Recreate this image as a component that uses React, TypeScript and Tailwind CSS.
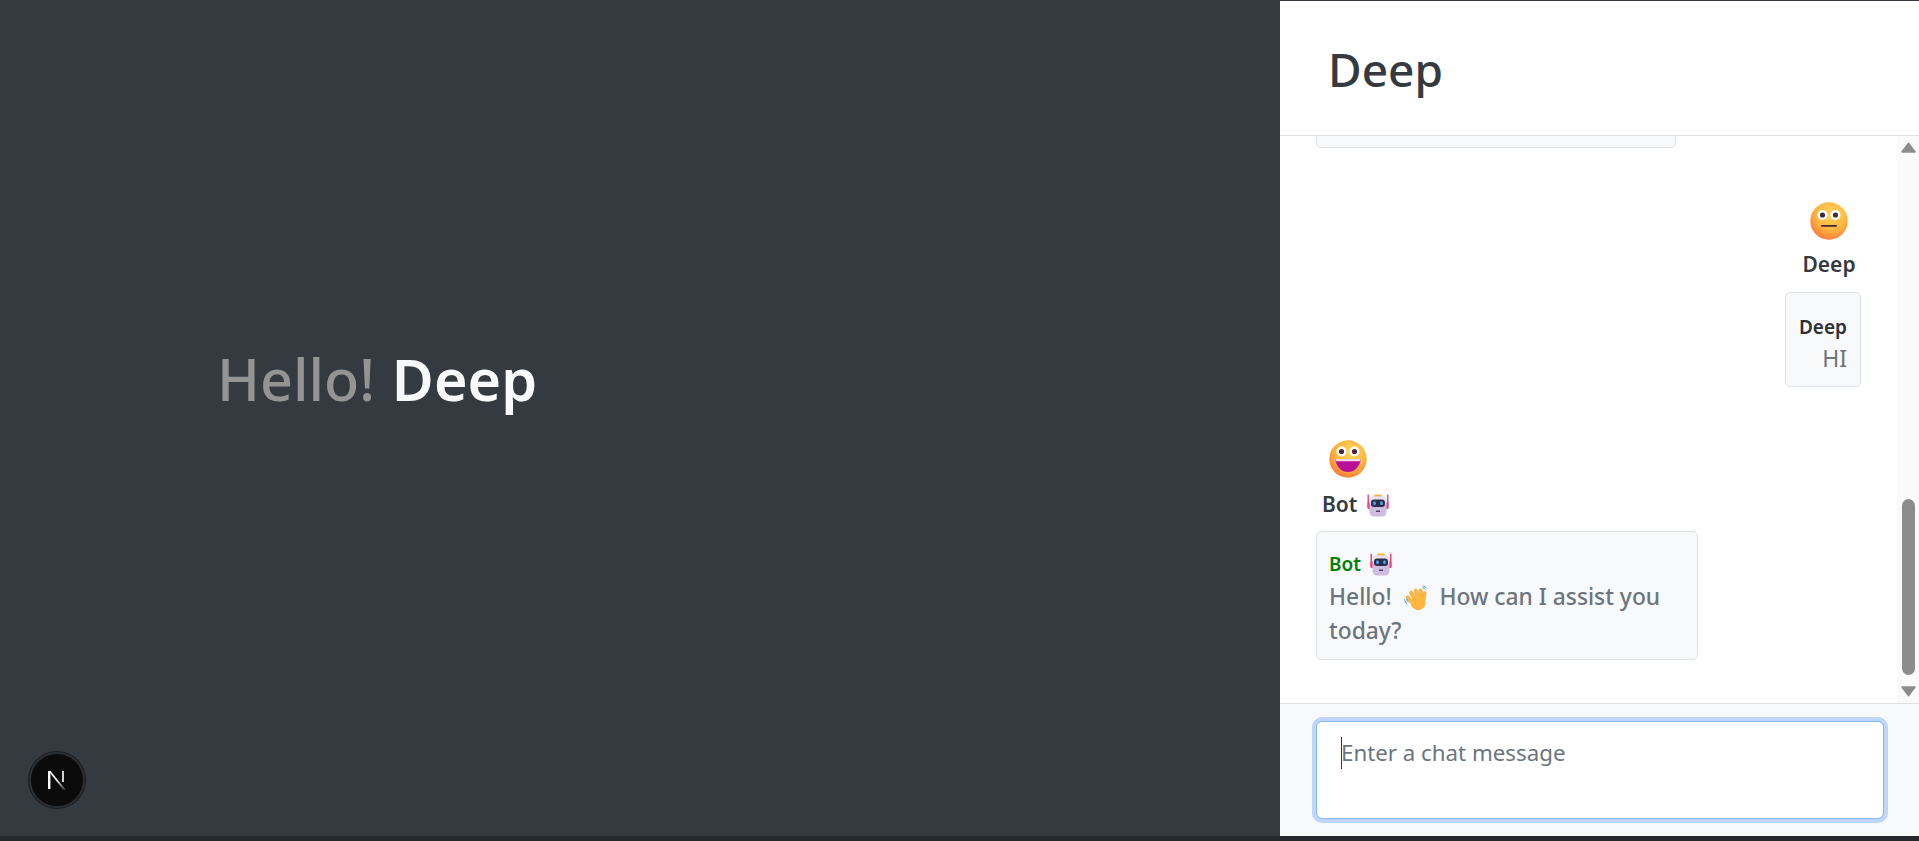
const SANS = "font-['Noto_Sans','Open_Sans',sans-serif]";

function FaceBase({ id }: { id: string }) {
  return (
    <>
      <defs>
        <radialGradient id={id} cx="58%" cy="32%" r="78%">
          <stop offset="0%" stopColor="#ffd75e" />
          <stop offset="55%" stopColor="#ffb43e" />
          <stop offset="88%" stopColor="#fa7f3c" />
          <stop offset="100%" stopColor="#ef6c8c" />
        </radialGradient>
      </defs>
      <circle cx="20" cy="20" r="18.7" fill={`url(#${id})`} />
    </>
  );
}

function StareFace() {
  return (
    <svg viewBox="0 0 40 40" className="w-10 h-10">
      <FaceBase id="stare" />
      <circle cx="13.500" cy="14" r="5" fill="#fff" />
      <circle cx="26.500" cy="14" r="5" fill="#fff" />
      <circle cx="13.500" cy="14" r="2.600" fill="#43273a" />
      <circle cx="26.500" cy="14" r="2.600" fill="#43273a" />
      <rect x="12" y="24" width="16" height="1.800" rx=".9" fill="#43273a" />
    </svg>
  );
}

function GrinFace() {
  return (
    <svg viewBox="0 0 40 40" className="w-10 h-10">
      <FaceBase id="grin" />
      <circle cx="13.500" cy="12.500" r="5" fill="#fff" />
      <circle cx="26.500" cy="12.500" r="5" fill="#fff" />
      <circle cx="13.500" cy="12.500" r="2.600" fill="#43273a" />
      <circle cx="26.500" cy="12.500" r="2.600" fill="#43273a" />
      <path d="M8.500 20h23c.8 0 1.200.6 1 1.400C31 28 26.500 33 20 33S9 28 7.500 21.400c-.2-.8.2-1.400 1-1.400z" fill="#b8109a" />
      <path d="M8.500 20h23c.7 0 1 .4 1 1l-.4 1.300H7.900L7.500 21c0-.6.300-1 1-1z" fill="#f0d5ee" />
    </svg>
  );
}

function RobotIcon() {
  return (
    <svg viewBox="0 0 24 24" className="w-6 h-6">
      <rect x="1.500" y="1.500" width="1.500" height="14" rx=".7" fill="#f0447f" />
      <rect x="21" y="1.500" width="1.500" height="14" rx=".7" fill="#f0447f" />
      <rect x="1.500" y="9" width="3" height="7" rx="1" fill="#f0447f" />
      <rect x="19.500" y="9" width="3" height="7" rx="1" fill="#f0447f" />
      <rect x="8" y="1.500" width="8" height="3.500" rx="1.200" fill="#f3b94a" />
      <rect x="3.500" y="3.500" width="17" height="20" rx="4.500" fill="#cdbde0" />
      <rect x="3.500" y="3.500" width="17" height="9" rx="4" fill="#e8e3ee" />
      <rect x="5" y="6.500" width="14" height="7.500" rx="3.200" fill="#2d2a4c" />
      <rect x="7.200" y="8.500" width="2.600" height="3.400" rx="1" fill="#3fb0f5" />
      <rect x="14.200" y="8.500" width="2.600" height="3.400" rx="1" fill="#3fb0f5" />
      <rect x="10" y="17.500" width="4" height="1.600" rx=".6" fill="#4a3f5e" />
    </svg>
  );
}

function WaveIcon() {
  return (
    <svg viewBox="0 0 24 24" className="w-[26px] h-[26px]">
      <g fill="#fdb73f" stroke="#f39a26" strokeWidth=".35">
        <rect x="5" y="9" width="3.200" height="10" rx="1.600" transform="rotate(-42 6.600 14)" />
        <rect x="8.200" y="5" width="3.200" height="12" rx="1.600" transform="rotate(-30 9.800 11)" />
        <rect x="11.600" y="3.500" width="3.200" height="12" rx="1.600" transform="rotate(-18 13.200 9.500)" />
        <rect x="15" y="3.500" width="3.200" height="11" rx="1.600" transform="rotate(-6 16.600 9)" />
        <rect x="18.200" y="6" width="2.800" height="9" rx="1.400" transform="rotate(8 19.600 10.500)" />
      </g>
      <ellipse cx="14" cy="16.500" rx="6.800" ry="6.800" fill="#fdb73f" />
      <path d="M1.500 13.500c.3 1.700 1.100 3.200 2.300 4.300M3.500 13c.2 1 .7 1.900 1.300 2.700" fill="none" stroke="#3f9be0" strokeWidth=".9" strokeLinecap="round" />
      <path d="M18.500 1c1.300.2 2.400.8 3.200 1.800M18.500 2.700c.7.1 1.300.4 1.700 1" fill="none" stroke="#3f9be0" strokeWidth=".9" strokeLinecap="round" />
    </svg>
  );
}

function ScrollBar() {
  return (
    <div className="w-[22px] shrink-0 bg-[#fafafa] flex flex-col items-center">
      <svg viewBox="0 0 15 11" className="mt-[6px] w-[15px] h-[11px] shrink-0">
        <path d="M7.500 1.500 13.800 9.800H1.200z" fill="#8c8c8c" stroke="#8c8c8c" strokeWidth="1.800" strokeLinejoin="round" />
      </svg>
      <div className="mt-[346px] w-[13px] h-[176px] shrink-0 rounded-full bg-[#8c8c8c]" />
      <svg viewBox="0 0 15 11" className="mt-[11px] w-[15px] h-[11px] shrink-0">
        <path d="M7.500 9.500 13.800 1.200H1.200z" fill="#8c8c8c" stroke="#8c8c8c" strokeWidth="1.800" strokeLinejoin="round" />
      </svg>
    </div>
  );
}

function Messages() {
  return (
    <div className="flex-1 min-w-0 pl-[36px] pr-[36px] overflow-hidden">
      <div className="w-[360px] h-[12px] bg-[#f8f9fa] border border-t-0 border-[#dee2e6] rounded-b-[5px]" />

      <div className="mt-[53px] flex flex-col items-end">
        <div className="w-[64px] flex flex-col items-center">
          <StareFace />
          <div className="mt-[10px] text-[21px] leading-[27px] font-semibold text-[#343a40]">Deep</div>
        </div>
        <div className="mt-[14px] w-[76px] h-[95px] bg-[#f8f9fa] border border-[#dee2e6] rounded-[5px] pr-[13px] pt-[22px] flex flex-col items-end">
          <div className="text-[19px] leading-[24px] font-semibold text-[#2c3136]">Deep</div>
          <div className="mt-[5px] text-[23px] leading-[28px] text-[#6c757d]">HI</div>
        </div>
      </div>

      <div className="mt-[52px]">
        <div className="w-[64px] flex flex-col items-center">
          <GrinFace />
        </div>
        <div className="mt-[12px] ml-[6px] flex items-center gap-[9px] text-[21px] leading-[27px] font-semibold text-[#343a40]">
          Bot <RobotIcon />
        </div>
        <div className="mt-[13px] w-[382px] h-[129px] bg-[#f8f9fa] border border-[#dee2e6] rounded-[5px] pl-[12px] pr-[13px] pt-[20px]">
          <div className="flex items-center gap-[8px] text-[19px] leading-[24px] font-semibold text-[#008000]">
            Bot <RobotIcon />
          </div>
          <div className="mt-[4px] text-[22.8px] leading-[34px] font-medium text-[#6c757d]">
            Hello! <span className="inline-block align-[-6px] mx-[5px]"><WaveIcon /></span> How can I assist you today?
          </div>
        </div>
      </div>
    </div>
  );
}

function ChatPanel() {
  return (
    <div className="flex-1 min-w-0 flex flex-col bg-white">
      <div className="h-[135px] shrink-0 border-b border-[#dee2e6] pl-[48px] pt-[44px]">
        <h1 className="text-[46px] leading-[48px] font-medium text-[#343a40]">Deep</h1>
      </div>
      <div className="h-[567px] shrink-0 flex">
        <Messages />
        <ScrollBar />
      </div>
      <div className="flex-1 border-t border-[#dee2e6] bg-[#f8f9fa] pl-[36px] pr-[35px] pt-[17px]">
        <div className="h-[98px] bg-white border border-[#86b7fe] rounded-[6px] ring-4 ring-[#0d6efd]/25 pl-[24px] pt-[15px] flex items-start">
          <div className="w-px h-[32px] bg-[#343a40]" />
          <span className="-ml-px text-[22.3px] leading-[32px] text-[#6c757d]">Enter a chat message</span>
        </div>
      </div>
    </div>
  );
}

export default function App() {
  return (
    <div className={`relative w-[1919px] h-[841px] flex flex-col overflow-hidden bg-[#343a40] ${SANS}`}>
      <div className="h-px shrink-0 bg-[#343a40]" />
      <div className="flex-1 min-h-0 flex">
        <div className="w-[1280px] shrink-0 flex items-center pl-[217px] pb-[78px]">
          <div className="text-[57.5px] leading-[67px]">
            <span className="text-[#949494] font-medium mr-[2px]">Hello! </span>
            <span className="text-[#f8f9fa] font-semibold">Deep</span>
          </div>
        </div>
        <ChatPanel />
      </div>
      <div className="h-[5px] shrink-0 bg-[#25282c]" />
      <div className="absolute left-[29px] top-[752px] w-[56px] h-[56px] rounded-full bg-[#0b0b0c] border-2 border-[#2b2e32] shadow-[0_0_0_1px_#1b1d20] flex items-center justify-center">
        <svg viewBox="0 0 20 20" className="w-[20px] h-[20px]">
          <defs>
            <linearGradient id="nfade" x1="0" y1="0" x2="1" y2="1">
              <stop offset="45%" stopColor="#fff" />
              <stop offset="100%" stopColor="#fff" stopOpacity="0.1" />
            </linearGradient>
          </defs>
          <rect x="1" y="1" width="2.400" height="18" fill="#fff" />
          <path d="M1.500 1 3.500 1 19 20 16.500 20z" fill="url(#nfade)" />
          <rect x="15" y="1" width="2" height="11" fill="#d0d0d0" />
        </svg>
      </div>
    </div>
  );
}
